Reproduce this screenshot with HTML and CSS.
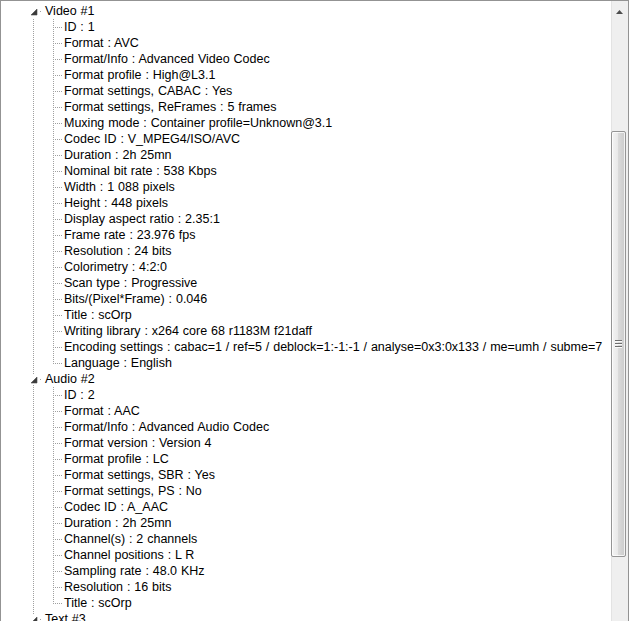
FILE: index.html
```html
<!DOCTYPE html>
<html>
<head>
<meta charset="utf-8">
<link rel="stylesheet" href="styles.css">
</head>
<body>
<div class="window">
  <div class="tree">
    <div class="row root"><span class="pad"></span><span class="cell"><svg class="exp" width="9" height="9" viewBox="0 0 9 9"><rect width="9" height="9" fill="#fff"/><path d="M8 2V8H2Z" fill="#3a3a3a" stroke="#4a4a4a" stroke-width="0.6" stroke-linejoin="round"/></svg><i class="hdot"></i></span><span class="label">Video #1</span></div>
    <div class="row"><span class="pad"></span><span class="cell trunk"></span><span class="branch"><i class="v"></i><i class="h"></i></span><span class="label">ID : 1</span></div>
    <div class="row"><span class="pad"></span><span class="cell trunk"></span><span class="branch"><i class="v"></i><i class="h"></i></span><span class="label">Format : AVC</span></div>
    <div class="row"><span class="pad"></span><span class="cell trunk"></span><span class="branch"><i class="v"></i><i class="h"></i></span><span class="label">Format/Info : Advanced Video Codec</span></div>
    <div class="row"><span class="pad"></span><span class="cell trunk"></span><span class="branch"><i class="v"></i><i class="h"></i></span><span class="label">Format profile : High@L3.1</span></div>
    <div class="row"><span class="pad"></span><span class="cell trunk"></span><span class="branch"><i class="v"></i><i class="h"></i></span><span class="label">Format settings, CABAC : Yes</span></div>
    <div class="row"><span class="pad"></span><span class="cell trunk"></span><span class="branch"><i class="v"></i><i class="h"></i></span><span class="label">Format settings, ReFrames : 5 frames</span></div>
    <div class="row"><span class="pad"></span><span class="cell trunk"></span><span class="branch"><i class="v"></i><i class="h"></i></span><span class="label">Muxing mode : Container profile=Unknown@3.1</span></div>
    <div class="row"><span class="pad"></span><span class="cell trunk"></span><span class="branch"><i class="v"></i><i class="h"></i></span><span class="label">Codec ID : V_MPEG4/ISO/AVC</span></div>
    <div class="row"><span class="pad"></span><span class="cell trunk"></span><span class="branch"><i class="v"></i><i class="h"></i></span><span class="label">Duration : 2h 25mn</span></div>
    <div class="row"><span class="pad"></span><span class="cell trunk"></span><span class="branch"><i class="v"></i><i class="h"></i></span><span class="label">Nominal bit rate : 538 Kbps</span></div>
    <div class="row"><span class="pad"></span><span class="cell trunk"></span><span class="branch"><i class="v"></i><i class="h"></i></span><span class="label">Width : 1 088 pixels</span></div>
    <div class="row"><span class="pad"></span><span class="cell trunk"></span><span class="branch"><i class="v"></i><i class="h"></i></span><span class="label">Height : 448 pixels</span></div>
    <div class="row"><span class="pad"></span><span class="cell trunk"></span><span class="branch"><i class="v"></i><i class="h"></i></span><span class="label">Display aspect ratio : 2.35:1</span></div>
    <div class="row"><span class="pad"></span><span class="cell trunk"></span><span class="branch"><i class="v"></i><i class="h"></i></span><span class="label">Frame rate : 23.976 fps</span></div>
    <div class="row"><span class="pad"></span><span class="cell trunk"></span><span class="branch"><i class="v"></i><i class="h"></i></span><span class="label">Resolution : 24 bits</span></div>
    <div class="row"><span class="pad"></span><span class="cell trunk"></span><span class="branch"><i class="v"></i><i class="h"></i></span><span class="label">Colorimetry : 4:2:0</span></div>
    <div class="row"><span class="pad"></span><span class="cell trunk"></span><span class="branch"><i class="v"></i><i class="h"></i></span><span class="label">Scan type : Progressive</span></div>
    <div class="row"><span class="pad"></span><span class="cell trunk"></span><span class="branch"><i class="v"></i><i class="h"></i></span><span class="label">Bits/(Pixel*Frame) : 0.046</span></div>
    <div class="row"><span class="pad"></span><span class="cell trunk"></span><span class="branch"><i class="v"></i><i class="h"></i></span><span class="label">Title : scOrp</span></div>
    <div class="row"><span class="pad"></span><span class="cell trunk"></span><span class="branch"><i class="v"></i><i class="h"></i></span><span class="label">Writing library : x264 core 68 r1183M f21daff</span></div>
    <div class="row"><span class="pad"></span><span class="cell trunk"></span><span class="branch"><i class="v"></i><i class="h"></i></span><span class="label">Encoding settings : cabac=1 / ref=5 / deblock=1:-1:-1 / analyse=0x3:0x133 / me=umh / subme=7</span></div>
    <div class="row"><span class="pad"></span><span class="cell trunk"></span><span class="branch last"><i class="v"></i><i class="h"></i></span><span class="label">Language : English</span></div>
    <div class="row root"><span class="pad"></span><span class="cell trunk"><svg class="exp" width="9" height="9" viewBox="0 0 9 9"><rect width="9" height="9" fill="#fff"/><path d="M8 2V8H2Z" fill="#3a3a3a" stroke="#4a4a4a" stroke-width="0.6" stroke-linejoin="round"/></svg><i class="hdot"></i></span><span class="label">Audio #2</span></div>
    <div class="row"><span class="pad"></span><span class="cell trunk"></span><span class="branch"><i class="v"></i><i class="h"></i></span><span class="label">ID : 2</span></div>
    <div class="row"><span class="pad"></span><span class="cell trunk"></span><span class="branch"><i class="v"></i><i class="h"></i></span><span class="label">Format : AAC</span></div>
    <div class="row"><span class="pad"></span><span class="cell trunk"></span><span class="branch"><i class="v"></i><i class="h"></i></span><span class="label">Format/Info : Advanced Audio Codec</span></div>
    <div class="row"><span class="pad"></span><span class="cell trunk"></span><span class="branch"><i class="v"></i><i class="h"></i></span><span class="label">Format version : Version 4</span></div>
    <div class="row"><span class="pad"></span><span class="cell trunk"></span><span class="branch"><i class="v"></i><i class="h"></i></span><span class="label">Format profile : LC</span></div>
    <div class="row"><span class="pad"></span><span class="cell trunk"></span><span class="branch"><i class="v"></i><i class="h"></i></span><span class="label">Format settings, SBR : Yes</span></div>
    <div class="row"><span class="pad"></span><span class="cell trunk"></span><span class="branch"><i class="v"></i><i class="h"></i></span><span class="label">Format settings, PS : No</span></div>
    <div class="row"><span class="pad"></span><span class="cell trunk"></span><span class="branch"><i class="v"></i><i class="h"></i></span><span class="label">Codec ID : A_AAC</span></div>
    <div class="row"><span class="pad"></span><span class="cell trunk"></span><span class="branch"><i class="v"></i><i class="h"></i></span><span class="label">Duration : 2h 25mn</span></div>
    <div class="row"><span class="pad"></span><span class="cell trunk"></span><span class="branch"><i class="v"></i><i class="h"></i></span><span class="label">Channel(s) : 2 channels</span></div>
    <div class="row"><span class="pad"></span><span class="cell trunk"></span><span class="branch"><i class="v"></i><i class="h"></i></span><span class="label">Channel positions : L R</span></div>
    <div class="row"><span class="pad"></span><span class="cell trunk"></span><span class="branch"><i class="v"></i><i class="h"></i></span><span class="label">Sampling rate : 48.0 KHz</span></div>
    <div class="row"><span class="pad"></span><span class="cell trunk"></span><span class="branch"><i class="v"></i><i class="h"></i></span><span class="label">Resolution : 16 bits</span></div>
    <div class="row"><span class="pad"></span><span class="cell trunk"></span><span class="branch last"><i class="v"></i><i class="h"></i></span><span class="label">Title : scOrp</span></div>
    <div class="row root"><span class="pad"></span><span class="cell trunk"><svg class="exp" width="9" height="9" viewBox="0 0 9 9"><rect width="9" height="9" fill="#fff"/><path d="M8 2V8H2Z" fill="#3a3a3a" stroke="#4a4a4a" stroke-width="0.6" stroke-linejoin="round"/></svg><i class="hdot"></i></span><span class="label">Text #3</span></div>
  </div>
  <div class="vscroll">
    <div class="sb-up"><svg width="7" height="4" viewBox="0 0 7 4"><path d="M3.5 0L7 4H0Z" fill="#4d4d4d"/></svg></div>
    <div class="thumb"><span class="grip"></span></div>
  </div>
</div>
</body>
</html>
```

FILE: styles.css
```css
html, body {
  margin: 0;
  padding: 0;
  background: #fff;
  overflow: hidden;
}

.window {
  box-sizing: border-box;
  width: 629px;
  height: 621px;
  border: 1px solid #939393;
  border-bottom: 0;
  display: flex;
  font-family: "Liberation Sans", Arial, sans-serif;
  font-size: 12.5px;
  word-spacing: 0.4px;
  line-height: 16px;
  color: #000;
}

.tree {
  flex: 1;
  min-width: 0;
  padding-top: 2px;
  overflow: hidden;
}

.row {
  display: flex;
  height: 16px;
  white-space: nowrap;
}

.pad {
  flex: none;
  width: 23px;
}

.cell {
  flex: none;
  width: 20px;
  height: 16px;
  display: flex;
  align-items: flex-start;
}

.trunk {
  background: linear-gradient(#a0a0a0 50%, transparent 50%) 9px 0 / 1px 2px repeat-y;
}

.exp {
  display: block;
  flex: none;
  margin-left: 5px;
  margin-top: 4px;
}

.hdot {
  display: block;
  flex: none;
  width: 1px;
  height: 1px;
  margin-left: 2px;
  margin-top: 8px;
  background: #a0a0a0;
}

.branch {
  flex: none;
  width: 18px;
  height: 16px;
  display: flex;
  align-items: flex-start;
}

.branch .v {
  display: block;
  flex: none;
  width: 1px;
  height: 16px;
  margin-left: 9px;
  background: linear-gradient(#a0a0a0 50%, transparent 50%) 0 0 / 1px 2px repeat-y;
}

.branch.last .v {
  height: 9px;
}

.branch .h {
  display: block;
  flex: none;
  width: 8px;
  height: 1px;
  margin-top: 8px;
  background: linear-gradient(90deg, transparent 50%, #a0a0a0 50%) 0 0 / 2px 1px repeat-x;
}

.label {
  flex: none;
  padding-left: 2px;
}

.root .label {
  padding-left: 1px;
}

.vscroll {
  flex: none;
  width: 17px;
  display: flex;
  flex-direction: column;
  background: #efefef;
  box-shadow: inset 1px 0 0 #e3e3e3;
}

.sb-up {
  box-sizing: border-box;
  height: 17px;
  padding-top: 9px;
  display: flex;
  justify-content: center;
  align-items: flex-start;
}

.sb-up svg {
  display: block;
}

.thumb {
  box-sizing: border-box;
  width: 15px;
  height: 426px;
  margin-top: 113px;
  border: 1px solid #959595;
  border-radius: 2px;
  background: linear-gradient(90deg, #f4f4f4 0%, #e9e9e9 45%, #dadada 50%, #cbcbcb 100%);
  box-shadow: inset 0 0 0 1px rgba(255, 255, 255, 0.75);
  display: flex;
  justify-content: center;
  align-items: center;
}

.grip {
  display: block;
  width: 7px;
  height: 8px;
  background: repeating-linear-gradient(#6e6e6e 0 1px, #fafafa 1px 2px, transparent 2px 3px);
}
```
